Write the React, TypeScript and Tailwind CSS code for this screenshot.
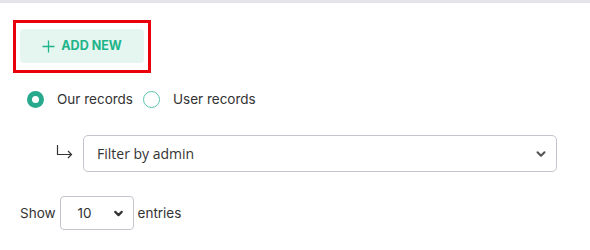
import React from "react";
import { FiChevronDown } from "react-icons/fi";

const poppins = { fontFamily: "Inter, 'Noto Sans', sans-serif" };

const Radio: React.FC<{ checked?: boolean; label: string }> = ({ checked, label }) => (
  <label className="flex items-center gap-[13px] text-[13.5px] text-[#333]" style={poppins}>
    {checked ? (
      <span className="w-[17px] h-[17px] rounded-full bg-[#26a98c] flex items-center justify-center">
        <span className="w-[7px] h-[7px] rounded-full bg-white" />
      </span>
    ) : (
      <span className="w-[17px] h-[17px] rounded-full border-[1.5px] border-[#5cc4ad]" />
    )}
    {label}
  </label>
);

export default function App() {
  return (
    <div className="w-[590px] h-[250px] bg-white overflow-hidden">
      <div className="h-[3px] bg-[#e4e4ea]" />
      <div className="pl-[13px] pt-[17px]">
        <div className="w-[138px] h-[53px] border-[3px] border-[#e8000b] pl-[4px] pt-[6px]">
          <button
            className="w-[124px] h-[34px] rounded-[4px] bg-[#e5f6f1] flex items-center justify-center gap-[6px] text-[#1eb489] text-[12.5px] font-bold"
            style={poppins}
          >
            <svg width="13" height="13" viewBox="0 0 13 13" className="mt-[1px]">
              <path d="M6.5 0.5v12M0.5 6.5h12" stroke="#1eb489" strokeWidth="1.3" />
            </svg>
            ADD NEW
          </button>
        </div>
      </div>
      <div className="flex items-center gap-[10px] pl-[27px] mt-[16px]">
        <Radio checked label="Our records" />
        <Radio label="User records" />
      </div>
      <div className="flex items-center pl-[56px] pr-[33px] mt-[26px]">
        <svg width="18" height="14" viewBox="0 0 18 14" className="mr-[9px] mt-[-4px]">
          <path d="M1.5 0v9.5h14M12 6l3.5 3.5L12 13" fill="none" stroke="#333" strokeWidth="1.2" />
        </svg>
        <div
          className="flex-1 h-[37px] border border-[#c4c4ce] rounded-[5px] flex items-center justify-between pl-[13px] pr-[8px] text-[14px] text-[#333]"
          style={{ fontFamily: "'Open Sans', sans-serif" }}
        >
          <span>Filter by admin</span>
          <FiChevronDown className="text-[#555] w-[14px] h-[14px]" strokeWidth={3.5} />
        </div>
      </div>
      <div className="flex items-center pl-[20px] mt-[24px] text-[13.5px] text-[#333]" style={poppins}>
        <span>Show</span>
        <div className="ml-[4px] w-[74px] h-[34px] border border-[#c4c4ce] rounded-[4px] flex items-center justify-between pl-[17px] pr-[8px]">
          <span>10</span>
          <FiChevronDown className="text-[#333] w-[13px] h-[13px]" strokeWidth={4} />
        </div>
        <span className="ml-[4px]">entries</span>
      </div>
    </div>
  );
}
